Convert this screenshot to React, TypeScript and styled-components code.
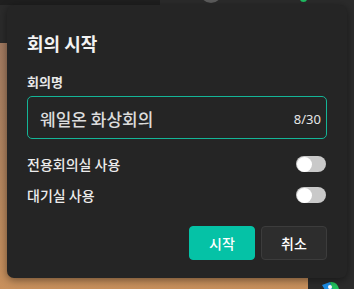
import React from "react";
import styled, { createGlobalStyle } from "styled-components";

const Global = createGlobalStyle`
  html, body { margin: 0; padding: 0; width: 354px; height: 289px; overflow: hidden; }
  body { font-family: "Noto Sans CJK KR", "Noto Sans", sans-serif; }
  * { box-sizing: border-box; }
`;

const Stage = styled.div`
  position: relative;
  width: 354px;
  height: 289px;
  overflow: hidden;
  padding: 5px 7px 0 7px;
  background:
    linear-gradient(#1f1f1f, #1f1f1f) 0 0 / 160px 5px no-repeat,
    linear-gradient(#2b2b2b, #2b2b2b) 0 0 / 100% 43px no-repeat,
    linear-gradient(#2b2b2b, #2b2b2b) right 0 top 0 / 46px 100% no-repeat,
    linear-gradient(180deg, #9c7761 0%, #b3855f 60%, #c8905c 100%);
`;

const TopDot = styled.div`
  position: absolute;
  left: 200px;
  top: -19px;
  width: 22px;
  height: 22px;
  border-radius: 50%;
  background: #5c5c5c;
`;

const GreenDot = styled.div`
  position: absolute;
  left: 300px;
  top: -4px;
  width: 7px;
  height: 6px;
  border-radius: 50%;
  background: #1fbf63;
`;

const CornerIcon = styled.svg`
  position: absolute;
  left: 321px;
  top: 281px;
`;

const Dialog = styled.section`
  position: relative;
  width: 340px;
  height: 273px;
  background: #252525;
  border-radius: 7px;
  box-shadow: 0 2px 8px rgba(0, 0, 0, 0.45);
  padding: 26px 20px 18px 20px;
  display: flex;
  flex-direction: column;
`;

const Title = styled.h2`
  margin: 0;
  font-size: 18px;
  line-height: 24px;
  font-weight: 700;
  color: #f2f2f2;
`;

const Label = styled.div`
  margin-top: 18px;
  font-size: 13px;
  line-height: 18px;
  font-weight: 700;
  color: #e8e8e8;
`;

const InputBox = styled.div`
  margin-top: 5px;
  height: 43px;
  border: 1px solid #14b597;
  border-radius: 5px;
  display: flex;
  align-items: center;
  padding: 2px 5px 0 12px;
`;

const InputText = styled.div`
  flex: 1;
  font-size: 17px;
  font-weight: 500;
  color: #dcdcdc;
`;

const Counter = styled.span`
  font-family: "Noto Sans", sans-serif;
  font-size: 13px;
  color: #e6e6e6;
`;

const Row = styled.div<{ $gap: number }>`
  margin-top: ${(p) => p.$gap}px;
  height: 24px;
  display: flex;
  align-items: center;
  justify-content: space-between;
`;

const RowLabel = styled.span`
  font-size: 14px;
  font-weight: 500;
  color: #ececec;
`;

const Toggle = styled.span`
  width: 30px;
  height: 16px;
  border-radius: 8px;
  background: #c9c9c9;
  display: flex;
  align-items: center;
  padding-left: 1px;
  margin-right: 1px;
`;

const Knob = styled.span`
  width: 15px;
  height: 15px;
  border-radius: 50%;
  background: #ffffff;
`;

const Actions = styled.div`
  margin-top: auto;
  display: flex;
  justify-content: flex-end;
  gap: 6px;
`;

const Button = styled.button<{ $primary?: boolean }>`
  width: 66px;
  height: 34px;
  border-radius: 4px;
  font-family: "Noto Sans CJK KR", sans-serif;
  font-size: 14px;
  font-weight: 500;
  color: #ffffff;
  cursor: pointer;
  background: ${(p) => (p.$primary ? "#05c2a6" : "#2d2d2d")};
  border: 1px solid ${(p) => (p.$primary ? "#05c2a6" : "#3c3c3c")};
  padding: 0;
`;

export default function App() {
  return (
    <>
      <Global />
      <Stage>
        <TopDot />
        <GreenDot />
        <CornerIcon width="20" height="10" viewBox="0 0 20 10">
          <path d="M1 4 L9 1 L12 8 L4 9 Z" fill="#1d8fe8" />
          <path d="M9 1 Q16 0 18 8 L12 9 Z" fill="#22c35e" />
          <circle cx="9" cy="6" r="2" fill="#ffffff" />
        </CornerIcon>
        <Dialog>
          <Title>회의 시작</Title>
          <Label>회의명</Label>
          <InputBox>
            <InputText>웨일온 화상회의</InputText>
            <Counter>8/30</Counter>
          </InputBox>
          <Row $gap={13}>
            <RowLabel>전용회의실 사용</RowLabel>
            <Toggle><Knob /></Toggle>
          </Row>
          <Row $gap={7}>
            <RowLabel>대기실 사용</RowLabel>
            <Toggle><Knob /></Toggle>
          </Row>
          <Actions>
            <Button $primary>시작</Button>
            <Button>취소</Button>
          </Actions>
        </Dialog>
      </Stage>
    </>
  );
}
